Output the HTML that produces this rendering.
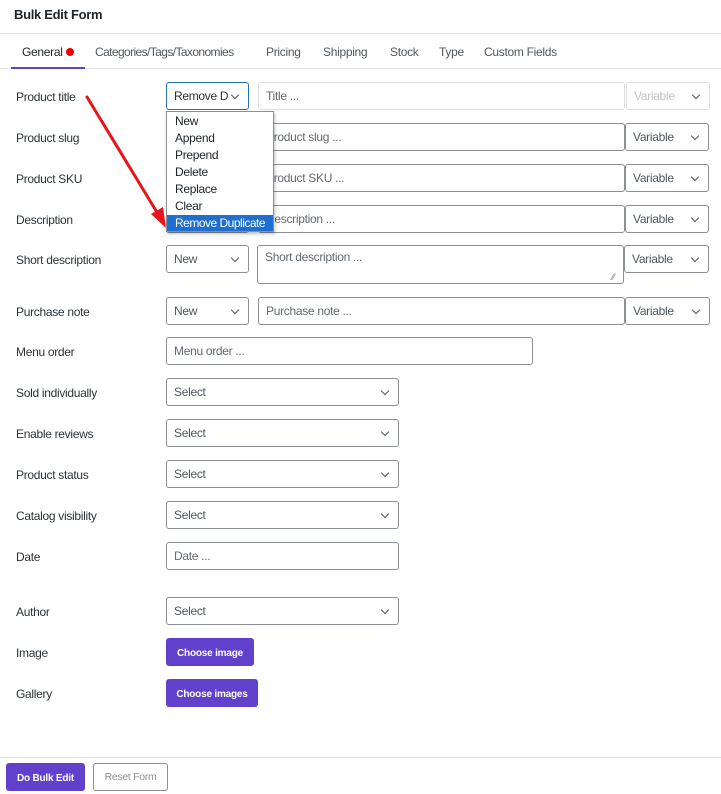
<!DOCTYPE html>
<html><head><meta charset="utf-8"><style>
*{box-sizing:border-box;margin:0;padding:0}
body{width:721px;height:794px;background:#fff;font-family:"Liberation Sans",sans-serif;font-size:12px;color:#3c434a;position:relative;overflow:hidden;letter-spacing:-0.3px}
.a{position:absolute}
.lbl{position:absolute;left:16px;font-size:12px;color:#2c3338}
.box{position:absolute;border:1px solid #8c8f94;border-radius:3px;background:#fff;height:28px;padding:0 7px;line-height:26px;font-size:12px;color:#50575e;white-space:nowrap;overflow:hidden}
.sel::after{content:"";position:absolute;right:10px;top:9px;width:5px;height:5px;border-right:1.3px solid #50575e;border-bottom:1.3px solid #50575e;transform:rotate(45deg)}
.ph{color:#646970}
.tab{position:absolute;top:44px;height:16px;line-height:16px;font-size:12px;color:#50575e;white-space:nowrap}
.btn{position:absolute;background:#6140cc;color:#fff;font-weight:bold;font-size:10px;border-radius:3px;height:28px;display:flex;align-items:center;justify-content:center;letter-spacing:-0.2px;padding-top:2px}
.dd div{height:17px;line-height:17px;padding-left:8px;font-size:12px;color:#1d2327;white-space:nowrap}
</style></head><body>
<div class="a" style="left:14px;top:7px;font-size:13px;font-weight:bold;color:#1d2327">Bulk Edit Form</div>
<div class="a" style="left:0;top:33px;width:721px;height:1px;background:#e5e5e5"></div>
<div class="tab" style="left:22px;color:#1d2327">General</div>
<div class="a" style="left:66px;top:48px;width:8px;height:8px;border-radius:50%;background:#e00"></div>
<div class="tab" style="left:95px;letter-spacing:-0.6px">Categories/Tags/Taxonomies</div>
<div class="tab" style="left:266px">Pricing</div>
<div class="tab" style="left:323px">Shipping</div>
<div class="tab" style="left:390px">Stock</div>
<div class="tab" style="left:439px">Type</div>
<div class="tab" style="left:484px">Custom Fields</div>
<div class="a" style="left:0;top:68px;width:721px;height:1px;background:#e5e5e5"></div>
<div class="a" style="left:11px;top:67px;width:74px;height:2px;background:#6140cc"></div>

<div class="lbl" style="top:90px">Product title</div>
<div class="lbl" style="top:131px">Product slug</div>
<div class="lbl" style="top:172px">Product SKU</div>
<div class="lbl" style="top:213px">Description</div>
<div class="lbl" style="top:253px">Short description</div>
<div class="lbl" style="top:305px">Purchase note</div>
<div class="lbl" style="top:345px">Menu order</div>
<div class="lbl" style="top:386px">Sold individually</div>
<div class="lbl" style="top:427px">Enable reviews</div>
<div class="lbl" style="top:468px">Product status</div>
<div class="lbl" style="top:509px">Catalog visibility</div>
<div class="lbl" style="top:550px">Date</div>
<div class="lbl" style="top:605px">Author</div>
<div class="lbl" style="top:646px">Image</div>
<div class="lbl" style="top:687px">Gallery</div>

<div class="box sel" style="left:166px;top:82px;width:83px;border-color:#2271b1;color:#2c3338"><span style="display:block;width:55px;overflow:hidden">Remove Duplicate</span></div>
<div class="box ph" style="left:258px;top:82px;width:367px;border-color:#e0e0e0">Title ...</div>
<div class="box sel" style="left:626px;top:82px;width:84px;border-color:#e0e0e0;color:#c3c4c7">Variable</div>
<div class="box" style="left:166px;top:123px;width:83px"></div>
<div class="box ph" style="left:258px;top:123px;width:367px">Product slug ...</div>
<div class="box sel" style="left:625px;top:123px;width:84px">Variable</div>
<div class="box" style="left:166px;top:164px;width:83px"></div>
<div class="box ph" style="left:258px;top:164px;width:367px">Product SKU ...</div>
<div class="box sel" style="left:625px;top:164px;width:84px">Variable</div>
<div class="box" style="left:166px;top:205px;width:83px"></div>
<div class="box ph" style="left:258px;top:205px;width:367px">Description ...</div>
<div class="box sel" style="left:625px;top:205px;width:84px">Variable</div>
<div class="box sel" style="left:166px;top:245px;width:83px">New</div>
<div class="box ph" style="left:257px;top:245px;width:367px;height:39px;line-height:22px">Short description ...</div>
<div class="a" style="left:612px;top:272px;font-size:9px;color:#777">⁄⁄</div>
<div class="box sel" style="left:624px;top:245px;width:85px">Variable</div>
<div class="box sel" style="left:166px;top:297px;width:83px">New</div>
<div class="box ph" style="left:258px;top:297px;width:367px">Purchase note ...</div>
<div class="box sel" style="left:625px;top:297px;width:85px">Variable</div>
<div class="box ph" style="left:166px;top:337px;width:367px">Menu order ...</div>
<div class="box sel" style="left:166px;top:378px;width:233px">Select</div>
<div class="box sel" style="left:166px;top:419px;width:233px">Select</div>
<div class="box sel" style="left:166px;top:460px;width:233px">Select</div>
<div class="box sel" style="left:166px;top:501px;width:233px">Select</div>
<div class="box ph" style="left:166px;top:542px;width:233px">Date ...</div>
<div class="box sel" style="left:166px;top:597px;width:233px">Select</div>
<div class="btn" style="left:166px;top:638px;width:88px">Choose image</div>
<div class="btn" style="left:166px;top:679px;width:92px">Choose images</div>

<div class="a dd" style="left:166px;top:111px;width:108px;height:121px;background:#fff;border:1px solid #8c8f94;box-shadow:1px 2px 3px rgba(0,0,0,.25);padding-top:1px;overflow:hidden">
<div>New</div><div>Append</div><div>Prepend</div><div>Delete</div><div>Replace</div><div>Clear</div><div style="background:#1f6fd0;color:#fff;letter-spacing:-0.5px">Remove Duplicate</div>
</div>

<svg class="a" style="left:0;top:0" width="721" height="794">
<line x1="87" y1="97" x2="158" y2="214" stroke="#e8141b" stroke-width="3" stroke-linecap="round"/>
<polygon points="166,228 151,214 163,207" fill="#e8141b"/>
</svg>

<div class="a" style="left:0;top:757px;width:721px;height:1px;background:#e0e0e0"></div>
<div class="btn" style="left:6px;top:763px;width:79px">Do Bulk Edit</div>
<div class="a" style="left:93px;top:763px;width:75px;height:28px;border:1px solid #8c8f94;border-radius:3px;text-align:center;line-height:26px;font-size:10.5px;color:#8c8f94">Reset Form</div>
</body></html>
